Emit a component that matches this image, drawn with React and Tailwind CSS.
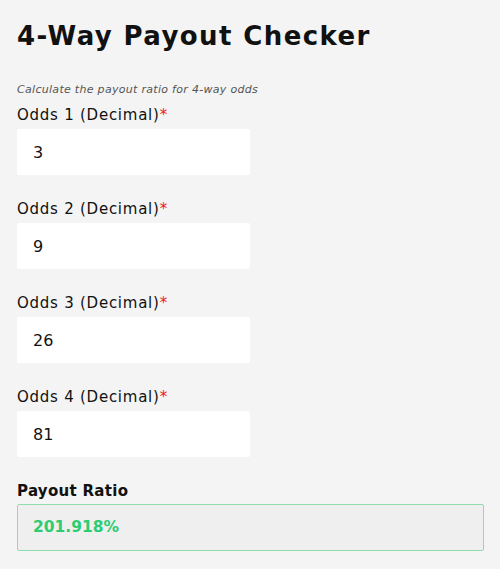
const ODDS = [
  { label: 'Odds 1 (Decimal)', value: '3' },
  { label: 'Odds 2 (Decimal)', value: '9' },
  { label: 'Odds 3 (Decimal)', value: '26' },
  { label: 'Odds 4 (Decimal)', value: '81' },
]

const FONT = { fontFamily: '"DejaVu Sans", "Liberation Sans", sans-serif' }

export default function App() {
  const inv = ODDS.reduce((s, o) => s + 1 / parseFloat(o.value), 0)
  const ratio = (100 / inv).toFixed(3)

  return (
    <div className="min-h-[569px] bg-[#f4f4f4] px-[17px] pt-[20px] text-[#111]" style={FONT}>
      <h1 className="text-[26px] font-bold tracking-[1.4px] leading-[32px]">4-Way Payout Checker</h1>

      <p className="mt-[31px] text-[11px] italic text-[#555] tracking-[0.3px] leading-[14px]">
        Calculate the payout ratio for 4-way odds
      </p>

      {/* Odds inputs */}
      <div className="flex flex-col gap-[24px] mt-[8px]">
        {ODDS.map((o) => (
          <div key={o.label} className="flex flex-col">
            <label className="text-[15px] tracking-[0.75px] leading-[20px] mb-[4px]">
              {o.label}
              <span className="text-[#f01818]">*</span>
            </label>
            <input
              readOnly
              value={o.value}
              className="w-[233px] h-[46px] bg-white rounded-[2px] px-[16px] text-[16px] text-[#111] outline-none"
              style={FONT}
            />
          </div>
        ))}
      </div>

      {/* Result */}
      <div className="mt-[24px] text-[15px] font-bold tracking-[0.3px] leading-[20px]">Payout Ratio</div>
      <div className="mt-[3px] h-[47px] w-[467px] bg-[#efefef] border border-[#8fdcac] rounded-[2px] flex items-center px-[15px]">
        <span className="text-[15.5px] font-bold text-[#2ecc71]">{ratio}%</span>
      </div>
    </div>
  )
}
